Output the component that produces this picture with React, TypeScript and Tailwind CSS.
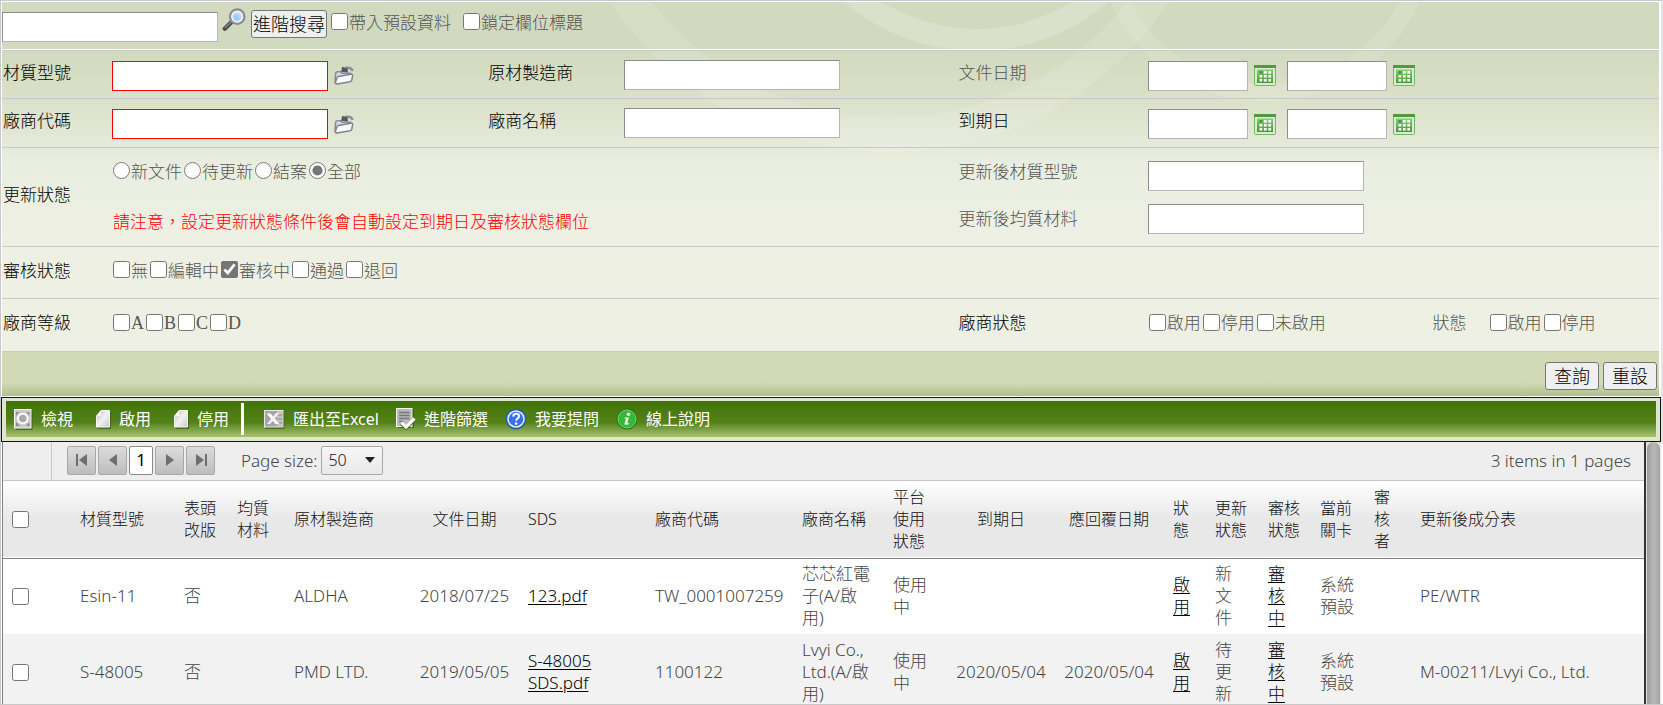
import { useState } from 'react'
import type { ReactNode } from 'react'

const FORM_GRID = 'grid grid-cols-[110fr_375fr_137fr_333fr_190fr_511fr] border-b border-[#c9c9cd]'
const INPUT = 'border border-[#b5b5b9] border-t-[#8c8c90] border-l-[#8c8c90] bg-white px-1 outline-none'
const CHECK = 'size-[17px] shrink-0 accent-[#757575]'

type RowData = {
  id: string
  material: string
  revised: string
  maker: string
  docDate: string
  sds: string
  vendorCode: string
  vendorName: string
  platform: string
  expiry: string
  reply: string
  status: string
  update: string
  audit: string
  stage: string
  auditor: string
  composition: string
}

const rows: RowData[] = [
  {
    id: 'r1',
    material: 'Esin-11',
    revised: '否',
    maker: 'ALDHA',
    docDate: '2018/07/25',
    sds: '123.pdf',
    vendorCode: 'TW_0001007259',
    vendorName: '芯芯紅電子(A/啟用)',
    platform: '使用中',
    expiry: '',
    reply: '',
    status: '啟用',
    update: '新文件',
    audit: '審核中',
    stage: '系統預設',
    auditor: '',
    composition: 'PE/WTR',
  },
  {
    id: 'r2',
    material: 'S-48005',
    revised: '否',
    maker: 'PMD LTD.',
    docDate: '2019/05/05',
    sds: 'S-48005 SDS.pdf',
    vendorCode: '1100122',
    vendorName: 'Lvyi Co., Ltd.(A/啟用)',
    platform: '使用中',
    expiry: '2020/05/04',
    reply: '2020/05/04',
    status: '啟用',
    update: '待更新',
    audit: '審核中',
    stage: '系統預設',
    auditor: '',
    composition: 'M-00211/Lvyi Co., Ltd.',
  },
]

const columns = [
  { title: '材質型號', width: 104 },
  { title: '表頭改版', width: 53 },
  { title: '均質材料', width: 57 },
  { title: '原材製造商', width: 123 },
  { title: '文件日期', width: 111, center: true },
  { title: 'SDS', width: 127 },
  { title: '廠商代碼', width: 147 },
  { title: '廠商名稱', width: 91 },
  { title: '平台使用狀態', width: 64 },
  { title: '到期日', width: 104, center: true },
  { title: '應回覆日期', width: 112, center: true },
  { title: '狀態', width: 42 },
  { title: '更新狀態', width: 53 },
  { title: '審核狀態', width: 52 },
  { title: '當前關卡', width: 54 },
  { title: '審核者', width: 46 },
  { title: '更新後成分表' },
]

function SearchIcon() {
  return (
    <svg viewBox="0 0 24 24" className="size-6" aria-hidden="true">
      <defs>
        <radialGradient id="lens" cx="0.45" cy="0.6" r="0.6">
          <stop offset="0" stopColor="#8fc0f5" />
          <stop offset="1" stopColor="#e6f2fd" />
        </radialGradient>
      </defs>
      <path d="M9 14.5 L2.8 20.7" stroke="#4d4d52" strokeWidth="4.4" strokeLinecap="round" />
      <path d="M9 14 L3.4 19.6" stroke="#85858c" strokeWidth="1.4" strokeLinecap="round" />
      <circle cx="15.2" cy="8.6" r="7" fill="url(#lens)" stroke="#8c8c92" strokeWidth="2.8" />
      <circle cx="15.2" cy="8.6" r="5.4" fill="none" stroke="#f6f6f6" strokeWidth="1.4" />
    </svg>
  )
}

function FolderIcon() {
  return (
    <svg viewBox="0 0 20 19" className="h-[19px] w-5" aria-hidden="true">
      <path d="M1 16.5 L1.6 7.5 Q1.8 5.8 3.4 5.8 H6.5 L8 7.2 H16.5 V10" fill="#d9dae2" stroke="#8a8c9a" strokeWidth="1.6" />
      <path d="M1.4 17.6 Q2.4 11 4.6 10.4 L16.8 8.2 Q18.6 8 18.6 9.6 L17.8 14 Q17.4 15.4 16 15.7 L3 18 Z" fill="#fdfdff" stroke="#7f818f" strokeWidth="1.5" strokeLinejoin="round" />
      <path d="M18.6 5 Q17.4 1 11 2" fill="none" stroke="#8a8c98" strokeWidth="2.4" />
      <path d="M7 5.8 L14 6.4 L13.6 2.4 L8.2 0.8 Z" fill="#555766" />
    </svg>
  )
}

function CalendarIcon() {
  return (
    <svg viewBox="0 0 22 21" className="h-[21px] w-[22px]" aria-hidden="true">
      <defs>
        <linearGradient id="cal" x1="0" y1="0" x2="0" y2="1">
          <stop offset="0" stopColor="#86cf72" />
          <stop offset="1" stopColor="#4a9438" />
        </linearGradient>
      </defs>
      <rect x="0.5" y="0.5" width="21" height="20" rx="1" fill="#d8eed0" stroke="#74b863" />
      <rect x="0" y="0" width="22" height="3" fill="#4f9a3e" />
      <rect x="3" y="4.5" width="16" height="13.5" fill="url(#cal)" />
      {[0, 1, 2].map((r) =>
        [0, 1, 2].map((c) => (
          <rect key={`${c}-${r}`} x={5.5 + c * 4.4} y={6 + r * 4} width="2.8" height="2.6" fill={c === 0 && r === 0 ? '#4a9438' : '#fff'} />
        )),
      )}
    </svg>
  )
}

function ViewIcon() {
  return (
    <svg viewBox="0 0 19 21" className="h-[21px] w-[19px]" aria-hidden="true">
      <rect x="1.5" y="2" width="17" height="19" fill="#2f4d10" opacity="0.6" />
      <rect x="0.5" y="0.5" width="16.5" height="18.5" fill="#c9c9c9" stroke="#f4f4f4" />
      <path d="M2 3 L5 3 L2 7 Z M15.5 3 H12.5 L15.5 7 Z M2 17 H6 L2 13 Z M15.5 17 H12 L15.5 13 Z" fill="#8d8d8d" />
      <circle cx="8.8" cy="9.5" r="4.8" fill="#a9a9a9" stroke="#fff" strokeWidth="2" />
    </svg>
  )
}

function PageIcon() {
  return (
    <svg viewBox="0 0 15 19" className="h-[19px] w-[15px]" aria-hidden="true">
      <defs>
        <linearGradient id="page" x1="0" y1="0" x2="1" y2="1">
          <stop offset="0" stopColor="#bdbdbd" />
          <stop offset="0.5" stopColor="#f2f2f2" />
          <stop offset="1" stopColor="#c8c8c8" />
        </linearGradient>
      </defs>
      <path d="M6 2 H15 V19 H1.5 V7 Z" fill="#2f4d10" opacity="0.6" />
      <path d="M5 0.5 H13.5 V17 H0.5 V6 Z" fill="url(#page)" stroke="#f5f5f5" />
      <path d="M5 0.5 V6 H0.5 Z" fill="#fff" />
    </svg>
  )
}

function ExcelIcon() {
  return (
    <svg viewBox="0 0 21 19" className="h-[19px] w-[21px]" aria-hidden="true">
      <rect x="1.5" y="2" width="19" height="17" fill="#2f4d10" opacity="0.6" />
      <rect x="0.5" y="0.5" width="18.5" height="16.5" fill="#a5a5a5" stroke="#e9e9e9" />
      <rect x="13" y="1" width="5.5" height="15.5" fill="#c4c4c4" />
      <path d="M13.5 5 H18 M13.5 9 H18 M13.5 13 H18" stroke="#8a8a8a" />
      <path d="M2.5 3.5 H6.5 L15.5 14 H11.5 Z" fill="#fff" />
      <path d="M15.5 3 H12 L3 14 H6 Z" fill="#f1f1f1" />
    </svg>
  )
}

function FilterIcon() {
  return (
    <svg viewBox="0 0 20 22" className="h-[22px] w-5" aria-hidden="true">
      <rect x="2" y="2" width="16" height="18" fill="#2f4d10" opacity="0.6" />
      <rect x="0.5" y="0.5" width="15.5" height="18" fill="#b9b9b9" stroke="#f4f4f4" />
      <path d="M3 4.5 H13.5 M3 7.5 H13.5 M3 10.5 H13.5 M3 13.5 H8" stroke="#77777a" strokeWidth="1.3" />
      <path d="M5.5 15.5 L10 19.5 L18.5 11" fill="none" stroke="#3f5f1a" strokeWidth="4" />
      <path d="M5.5 14.5 L10 19 L18.5 10.5" fill="none" stroke="#fff" strokeWidth="3.2" />
    </svg>
  )
}

function HelpIcon() {
  return (
    <svg viewBox="0 0 22 22" className="size-[22px]" aria-hidden="true">
      <circle cx="11" cy="11" r="10.5" fill="#2a5fa8" />
      <circle cx="11" cy="11" r="8" fill="#3470ee" stroke="#dfe9fb" strokeWidth="1.6" />
      <path d="M8.2 8.6 Q8.4 5.8 11.2 5.8 Q14 5.8 14 8.2 Q14 9.8 12.3 10.6 Q11.2 11.2 11.2 12.8" fill="none" stroke="#fff" strokeWidth="2" />
      <circle cx="11.1" cy="15.6" r="1.3" fill="#fff" />
    </svg>
  )
}

function InfoIcon() {
  return (
    <svg viewBox="0 0 22 22" className="size-[22px]" aria-hidden="true">
      <circle cx="11" cy="11" r="10.5" fill="#1f7a1c" />
      <circle cx="11" cy="11" r="9" fill="#35b935" stroke="#6fd66c" strokeWidth="1" />
      <circle cx="12.4" cy="6.2" r="1.7" fill="#fff" />
      <path d="M8.8 9.4 H12.8 L11.2 15.2 H13 L12.7 16.4 H8.4 L10 10.6 H8.5 Z" fill="#fff" />
    </svg>
  )
}

function Label({ htmlFor, muted, children }: { htmlFor?: string; muted?: boolean; children: ReactNode }) {
  return (
    <label htmlFor={htmlFor} className={`pb-1 pl-px ${muted ? 'text-[#555]' : 'text-black'}`}>
      {children}
    </label>
  )
}

function CheckGroup({ items, checked, serif }: { items: string[]; checked?: string; serif?: boolean }) {
  return (
    <div className="flex gap-0.5 pb-1 pl-px">
      {items.map((item) => (
        <label
          key={item}
          className={`flex items-center gap-px text-[#555] ${serif ? "font-['Liberation_Serif',serif] text-lg leading-[22px] font-normal" : ''}`}
        >
          <input type="checkbox" defaultChecked={item === checked} className={`${CHECK} mb-0.5`} />
          {item}
        </label>
      ))}
    </div>
  )
}

function LookupField({ id }: { id: string }) {
  return (
    <div className="flex items-center gap-1.5 pt-0.5">
      <input id={id} className="h-[30px] w-[216px] border border-[#f00] bg-white px-1 outline-none" />
      <button type="button" aria-label="選取">
        <FolderIcon />
      </button>
    </div>
  )
}

function DateRange({ id, label }: { id: string; label: string }) {
  return (
    <div className="flex items-center gap-[11px] pt-0.5">
      {['start', 'end'].map((part) => (
        <div key={part} className="flex items-center gap-1.5">
          <input id={`${id}-${part}`} aria-label={label} className={`h-[30px] w-[100px] ${INPUT}`} />
          <button type="button" aria-label="日期">
            <CalendarIcon />
          </button>
        </div>
      ))}
    </div>
  )
}

function Swirls() {
  return (
    <svg className="absolute inset-0 h-[240px] w-full" viewBox="0 0 1656 240" preserveAspectRatio="none" aria-hidden="true">
      <g fill="none" stroke="#fff">
        <circle cx="974" cy="-153" r="191" strokeWidth="22" opacity="0.2" />
        <circle cx="887" cy="-185" r="318" strokeWidth="34" opacity="0.12" />
        <circle cx="1262" cy="-69" r="160" strokeWidth="18" opacity="0.13" />
      </g>
    </svg>
  )
}

function ToolButton({ icon, children }: { icon: ReactNode; children: ReactNode }) {
  return (
    <button type="button" className="flex h-full items-center gap-2 text-base font-normal text-white">
      {icon}
      {children}
    </button>
  )
}

function PagerButton({ label, path }: { label: string; path: string }) {
  return (
    <button
      type="button"
      aria-label={label}
      className="flex h-[29px] w-[29px] items-center justify-center rounded-xs border border-[#a8a8a8] bg-linear-to-b from-[#dcdcdc] to-[#bdbdbd]"
    >
      <svg viewBox="0 0 12 12" className="size-3" aria-hidden="true">
        <path d={path} fill="#6e6e6e" />
      </svg>
    </button>
  )
}

function SearchForm() {
  const [state, setState] = useState('全部')

  return (
    <form className="relative text-[17px] leading-[22px]" onSubmit={(e) => e.preventDefault()}>
      <div className="absolute inset-0 bg-linear-to-b from-[#d1dabe] from-0% via-[#eaeee0] via-42% to-[#edf0e3] to-60%" />
      <div className="absolute inset-x-0 top-0 h-[100px] bg-linear-to-b from-[#d1dabe] from-50% to-[#dce1ca]" />
      <div className="absolute inset-x-0 top-[100px] h-[60px] bg-linear-to-b from-[#dce1ca] to-[#e9eddf]" />
      <Swirls />

      <div className="relative">
        <div className="flex h-12 items-start border-b border-white">
          <input aria-label="關鍵字" className={`mt-2.5 h-[30px] w-[216px] ${INPUT}`} />
          <button type="button" aria-label="搜尋" className="mt-1.5 ml-1">
            <SearchIcon />
          </button>
          <button type="button" className="mt-2 ml-[5px] h-7 rounded-[3px] border border-[#767676] bg-[#efefef] px-px text-lg leading-6 text-black">
            進階搜尋
          </button>
          <label className="mt-2.5 ml-1 flex items-center gap-px text-[#555]">
            <input type="checkbox" className={`${CHECK} mb-1`} />
            帶入預設資料
          </label>
          <label className="mt-2.5 ml-3 flex items-center gap-px text-[#555]">
            <input type="checkbox" className={`${CHECK} mb-1`} />
            鎖定欄位標題
          </label>
        </div>

        <div className={`${FORM_GRID} h-[49px] items-center border-t`}>
          <Label htmlFor="material">材質型號</Label>
          <LookupField id="material" />
          <Label htmlFor="maker">原材製造商</Label>
          <input id="maker" className={`h-[30px] w-[216px] ${INPUT}`} />
          <Label htmlFor="doc-start" muted>文件日期</Label>
          <DateRange id="doc" label="文件日期" />
        </div>

        <div className={`${FORM_GRID} h-[49px] items-center`}>
          <Label htmlFor="vendor">廠商代碼</Label>
          <LookupField id="vendor" />
          <Label htmlFor="vendor-name">廠商名稱</Label>
          <input id="vendor-name" className={`h-[30px] w-[216px] ${INPUT}`} />
          <Label htmlFor="due-start">到期日</Label>
          <DateRange id="due" label="到期日" />
        </div>

        <div className={`${FORM_GRID} h-[99px] items-center`}>
          <div className="pb-1 pl-px text-black">更新狀態</div>
          <div className="col-span-3 flex flex-col gap-7 pb-px">
            <div className="flex gap-0.5 pl-px">
              {['新文件', '待更新', '結案', '全部'].map((name) => (
                <label key={name} className="flex items-center gap-px text-[#555]">
                  <input
                    type="radio"
                    name="update-state"
                    checked={state === name}
                    onChange={() => setState(name)}
                    className={`${CHECK} mb-0.5`}
                  />
                  {name}
                </label>
              ))}
            </div>
            <p className="pl-px text-[#f00]">請注意，設定更新狀態條件後會自動設定到期日及審核狀態欄位</p>
          </div>
          <div className="flex flex-col gap-[21px]">
            <Label htmlFor="new-material" muted>更新後材質型號</Label>
            <Label htmlFor="new-homo" muted>更新後均質材料</Label>
          </div>
          <div className="flex flex-col gap-[13px]">
            <input id="new-material" className={`h-[30px] w-[216px] ${INPUT}`} />
            <input id="new-homo" className={`h-[30px] w-[216px] ${INPUT}`} />
          </div>
        </div>

        <div className={`${FORM_GRID} h-[52px] items-center`}>
          <div className="pb-1 pl-px text-black">審核狀態</div>
          <div className="col-span-5">
            <CheckGroup items={['無', '編輯中', '審核中', '通過', '退回']} checked="審核中" />
          </div>
        </div>

        <div className={`${FORM_GRID} h-[53px] items-center`}>
          <div className="pb-1 pl-px text-black">廠商等級</div>
          <div className="col-span-3">
            <CheckGroup items={['A', 'B', 'C', 'D']} serif />
          </div>
          <div className="pb-1 pl-px text-black">廠商狀態</div>
          <div className="grid grid-cols-[284fr_56fr_170fr] items-center">
            <CheckGroup items={['啟用', '停用', '未啟用']} />
            <div className="pb-1 text-[#555]">狀態</div>
            <CheckGroup items={['啟用', '停用']} />
          </div>
        </div>

        <div className="flex h-[44px] items-center justify-end gap-1 bg-linear-to-b from-[#d2dab5] from-70% to-[#b3bf8a] pr-0.5 pt-1 text-lg">
          <button type="submit" className="h-7 rounded-[3px] border border-[#767676] bg-[#efefef] px-2 leading-6 text-black">
            查詢
          </button>
          <button type="reset" className="h-7 rounded-[3px] border border-[#767676] bg-[#efefef] px-2 leading-6 text-black">
            重設
          </button>
        </div>
      </div>
    </form>
  )
}

function Toolbar() {
  return (
    <div className="border border-[#101c08] bg-[#dfe5d0] px-1 pt-[3px] pb-1">
      <div className="flex h-9 items-center bg-linear-to-b from-[#44750a] from-10% via-[#548219] via-60% to-[#a9c36e] pl-2">
        <div className="flex items-center gap-[23px]">
          <ToolButton icon={<ViewIcon />}>檢視</ToolButton>
          <ToolButton icon={<PageIcon />}>啟用</ToolButton>
          <ToolButton icon={<PageIcon />}>停用</ToolButton>
        </div>
        <div className="ml-3 h-8 w-[3px] bg-white" />
        <div className="ml-5 flex items-center gap-[17px]">
          <ToolButton icon={<ExcelIcon />}>匯出至Excel</ToolButton>
          <ToolButton icon={<FilterIcon />}>進階篩選</ToolButton>
          <ToolButton icon={<HelpIcon />}>我要提問</ToolButton>
          <ToolButton icon={<InfoIcon />}>線上說明</ToolButton>
        </div>
      </div>
    </div>
  )
}

function Pager() {
  return (
    <div className="flex h-[39px] shrink-0 items-center border-b border-[#c8c8c8] bg-[#eee] text-[17px] text-[#444]">
      <div className="h-full w-[49px] border-r border-[#c8c8c8]" />
      <div className="ml-[15px] flex items-center gap-0.5 pb-0.5">
        <PagerButton label="第一頁" path="M0 0 H2 V12 H0 Z M11 0 V12 L3 6 Z" />
        <PagerButton label="上一頁" path="M10 0 V12 L2 6 Z" />
        <button type="button" className="h-[29px] w-6 rounded-xs border border-[#8a8a8a] bg-white leading-6 font-normal text-black">
          1
        </button>
        <PagerButton label="下一頁" path="M2 0 V12 L10 6 Z" />
        <PagerButton label="最末頁" path="M1 0 V12 L9 6 Z M10 0 H12 V12 H10 Z" />
      </div>
      <label htmlFor="page-size" className="ml-[26px]">
        Page size:
      </label>
      <div className="relative ml-1 pb-0.5">
        <select
          id="page-size"
          defaultValue="50"
          className="block h-[29px] w-[62px] appearance-none rounded-xs border border-[#a8a8a8] bg-linear-to-b from-[#f6f6f6] to-[#e9e9e9] pl-1.5 text-base text-[#222]"
        >
          <option>10</option>
          <option>20</option>
          <option>50</option>
        </select>
        <svg viewBox="0 0 10 6" className="pointer-events-none absolute top-[11px] right-2 h-1.5 w-2.5" aria-hidden="true">
          <path d="M0 0 H10 L5 6 Z" fill="#222" />
        </svg>
      </div>
      <div className="ml-auto pr-[13px]">3 items in 1 pages</div>
    </div>
  )
}

function ResultTable() {
  const cell = 'pl-2 pr-3'
  const link = 'text-black underline underline-offset-2'

  return (
    <table className="w-full table-fixed border-collapse text-left text-[17px] leading-[22px] text-[#444]">
      <colgroup>
        <col style={{ width: 69 }} />
        {columns.map((c) => (
          <col key={c.title} style={{ width: c.width }} />
        ))}
      </colgroup>
      <thead>
        <tr className="h-[77px] border-b border-[#808080] bg-linear-to-b from-white to-[#e8e8e8] to-50% text-base leading-[22px] text-[#111]">
          <th className="pl-[9px]">
            <input type="checkbox" aria-label="全選" className={`${CHECK} block`} />
          </th>
          {columns.map((c) => (
            <th key={c.title} className={`font-light ${c.center ? 'text-center' : cell}`}>
              {c.title}
            </th>
          ))}
        </tr>
      </thead>
      <tbody>
        {rows.map((r) => (
          <tr key={r.id} className="h-[76px] bg-white even:bg-[#f2f2f2]">
            <td className="pl-[9px]">
              <input type="checkbox" aria-label={r.material} className={`${CHECK} block`} />
            </td>
            <td className={cell}>{r.material}</td>
            <td className={cell}>{r.revised}</td>
            <td className={cell} />
            <td className={cell}>{r.maker}</td>
            <td className="text-center">{r.docDate}</td>
            <td className={cell}>
              <a href="#sds" className={link}>{r.sds}</a>
            </td>
            <td className={cell}>{r.vendorCode}</td>
            <td className={cell}>{r.vendorName}</td>
            <td className={cell}>{r.platform}</td>
            <td className="text-center">{r.expiry}</td>
            <td className="text-center">{r.reply}</td>
            <td className={cell}>
              <a href="#status" className={link}>{r.status}</a>
            </td>
            <td className={cell}>{r.update}</td>
            <td className={cell}>
              <a href="#audit" className={link}>{r.audit}</a>
            </td>
            <td className={cell}>{r.stage}</td>
            <td className={cell}>{r.auditor}</td>
            <td className={cell}>{r.composition}</td>
          </tr>
        ))}
      </tbody>
    </table>
  )
}

export default function App() {
  return (
    <div className="flex h-screen flex-col overflow-hidden border-b border-l border-[#c8c8c8] bg-white font-['Noto_Sans','Noto_Sans_CJK_TC',sans-serif] font-light">
      <div className="border-t border-r-2 border-[#c8c8cc] border-r-[#e4e4e8]">
        <div className="border-x-2 border-t border-b border-white border-l-[1px]">
          <SearchForm />
        </div>
        <Toolbar />
      </div>
      <div className="flex min-h-0 flex-1 pl-px pr-0.5">
        <div className="flex min-w-0 flex-1 flex-col overflow-hidden border-x border-[#808080] border-r-2 border-r-[#333]">
          <Pager />
          <div className="min-h-0 flex-1 overflow-hidden">
            <ResultTable />
          </div>
        </div>
        <div className="w-[15px] bg-[#e4e4e4]">
          <div className="mx-px h-full rounded-t-lg bg-linear-to-r from-[#9a9a9a] via-[#b8b8b8] to-[#a4a4a4]" />
        </div>
      </div>
    </div>
  )
}
